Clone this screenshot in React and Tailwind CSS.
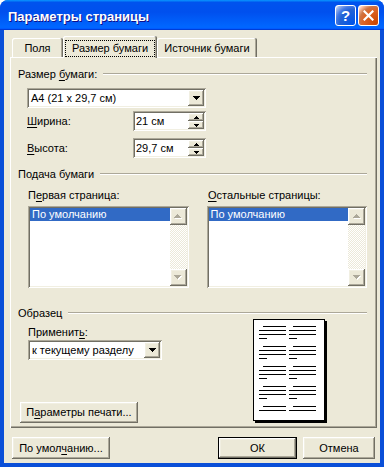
import React from "react";

// classic 3D edges (XP colours)
const raised =
  "shadow-[inset_-1px_-1px_#716f64,inset_1px_1px_#ffffff,inset_-2px_-2px_#aca899,inset_2px_2px_#f1efe2]";
const sunken =
  "shadow-[inset_1px_1px_#aca899,inset_-1px_-1px_#ffffff,inset_2px_2px_#716f64,inset_-2px_-2px_#f1efe2]";

const ArrowDown = ({ color = "#000" }) => (
  <svg width="7" height="4" viewBox="0 0 7 4" shapeRendering="crispEdges">
    <path d="M0 0h7v1H0zM1 1h5v1H1zM2 2h3v1H2zM3 3h1v1H3z" fill={color} />
  </svg>
);

const SmallUp = () => (
  <svg width="5" height="3" viewBox="0 0 5 3" shapeRendering="crispEdges">
    <path d="M2 0h1v1H2zM1 1h3v1H1zM0 2h5v1H0z" fill="#000" />
  </svg>
);

const SmallDown = () => (
  <svg width="5" height="3" viewBox="0 0 5 3" shapeRendering="crispEdges">
    <path d="M0 0h5v1H0zM1 1h3v1H1zM2 2h1v1H2z" fill="#000" />
  </svg>
);

const GrayArrow = ({ up }) => (
  <svg width="8" height="5" viewBox="0 0 8 5" shapeRendering="crispEdges">
    {up ? (
      <>
        <path d="M4 1h1v1H4zM3 2h3v1H3zM2 3h5v1H2zM1 4h7v1H1z" fill="#fff" />
        <path d="M3 0h1v1H3zM2 1h3v1H2zM1 2h5v1H1zM0 3h7v1H0z" fill="#aca899" />
      </>
    ) : (
      <>
        <path d="M1 1h7v1H1zM2 2h5v1H2zM3 3h3v1H3zM4 4h1v1H4z" fill="#fff" />
        <path d="M0 0h7v1H0zM1 1h5v1H1zM2 2h3v1H2zM3 3h1v1H3z" fill="#aca899" />
      </>
    )}
  </svg>
);

const U = ({ children }) => <span className="underline underline-offset-[2px]">{children}</span>;

function Header({ children, className = "" }) {
  return (
    <div className={`flex items-center h-[14px] ${className}`}>
      <span className="whitespace-nowrap">{children}</span>
      <div className="flex-1 ml-[6px] h-[2px] border-t border-[#aca899] border-b border-b-white" />
    </div>
  );
}

function Combo({ text, className = "" }) {
  return (
    <div className={`h-[20px] bg-white ${sunken} flex items-center pl-[4px] pr-[2px] ${className}`}>
      <span className="flex-1 whitespace-nowrap">{text}</span>
      <div className={`w-[16px] h-[16px] bg-[#ece9d8] ${raised} flex items-center justify-center`}>
        <ArrowDown />
      </div>
    </div>
  );
}

function Spin({ value }) {
  return (
    <div className={`w-[73px] h-[20px] bg-white ${sunken} flex items-center pl-[3px] pr-[2px]`}>
      <span className="flex-1">{value}</span>
      <div className="flex flex-col">
        <div className={`w-[16px] h-[8px] bg-[#ece9d8] ${raised} flex items-center justify-center`}>
          <SmallUp />
        </div>
        <div className={`w-[16px] h-[8px] bg-[#ece9d8] ${raised} flex items-center justify-center`}>
          <SmallDown />
        </div>
      </div>
    </div>
  );
}

function ListBox({ className = "" }) {
  return (
    <div className={`w-[162px] h-[82px] bg-white ${sunken} p-[2px] flex ${className}`}>
      <div className="flex-1">
        <div className="h-[13px] bg-[#316ac5] text-white pl-[2px] flex items-center">По умолчанию</div>
      </div>
      <div className="w-[17px] flex flex-col">
        <div className={`h-[17px] bg-[#ece9d8] ${raised} flex items-center justify-center`}>
          <GrayArrow up />
        </div>
        <div className="flex-1 bg-[repeating-conic-gradient(#ffffff_0%_25%,#ece9d8_0%_50%)] bg-[length:2px_2px]" />
        <div className={`h-[17px] bg-[#ece9d8] ${raised} flex items-center justify-center`}>
          <GrayArrow />
        </div>
      </div>
    </div>
  );
}

function Button({ children, className = "", isDefault }) {
  if (isDefault) {
    return (
      <div className={`border border-black ${className}`}>
        <div className={`h-full bg-[#ece9d8] ${raised} flex items-center justify-center`}>{children}</div>
      </div>
    );
  }
  return (
    <div className={`bg-[#ece9d8] ${raised} flex items-center justify-center whitespace-nowrap ${className}`}>
      {children}
    </div>
  );
}

function PreviewColumn() {
  const groups = [4, 4, 4, 4, 2];
  return (
    <div className="w-[27px] flex flex-col gap-[7px]">
      {groups.map((n, g) => (
        <div key={g} className="flex flex-col gap-[3px]">
          <div className="h-[1px] bg-black ml-[4px]" />
          {n > 1 && <div className="h-[1px] bg-black" />}
          {n > 2 && <div className="h-[1px] bg-black" />}
          {n > 3 && <div className="h-[1px] w-[8px] bg-black" />}
        </div>
      ))}
    </div>
  );
}

export default function App() {
  return (
    <div className="w-[384px] h-[470px] bg-white font-['Liberation_Sans',Arial,sans-serif] text-[11px] leading-[13px] text-black">
      <div className="w-[384px] h-[467px] flex flex-col rounded-t-[8px] overflow-hidden bg-[#0a4fd8]">
        {/* title bar */}
        <div className="h-[30px] flex items-center bg-[linear-gradient(180deg,#0997ff,#0053ee_8%,#0050ee_40%,#0066ff_88%,#0066ff_93%,#005bff_95%,#003dd7_96%,#003dd7)]">
          <span className="ml-[8px] pt-[2px] text-white font-bold text-[13px] [text-shadow:1px_1px_#0f1089]">
            Параметры страницы
          </span>
          <div className="ml-auto mr-[5px] flex gap-[2px]">
            <div className="w-[21px] h-[21px] rounded-[3px] border border-white bg-[radial-gradient(circle_at_90%_90%,#0054e9_0%,#2263d5_55%,#4479e4_70%,#a3bbec_90%,#ffffff_100%)] flex items-center justify-center text-white font-bold text-[15px] leading-none">
              ?
            </div>
            <div className="w-[21px] h-[21px] rounded-[3px] border border-white bg-[radial-gradient(circle_at_90%_90%,#cc4600_0%,#dc6527_55%,#cd7546_70%,#ffccb2_90%,#ffffff_100%)] flex items-center justify-center">
              <svg width="11" height="11" viewBox="0 0 11 11">
                <path d="M1.5 1.5l8 8M9.5 1.5l-8 8" stroke="#fff" strokeWidth="2.2" strokeLinecap="square" />
              </svg>
            </div>
          </div>
        </div>

        {/* body */}
        <div className="flex-1 mx-[4px] mb-[4px] bg-[#ece9d8] flex flex-col pt-[6px]">
          {/* tabs */}
          <div className="flex items-end h-[21px] ml-[8px]">
            <div className="w-[51px] h-[19px] rounded-t-[2px] shadow-[inset_-1px_0_#716f64,inset_1px_1px_#ffffff,inset_-2px_0_#aca899] flex items-center justify-center pt-[1px]">
              Поля
            </div>
            <div className="relative z-10 w-[94px] h-[22px] -mb-[1px] rounded-t-[2px] bg-[#ece9d8] shadow-[inset_-1px_0_#716f64,inset_1px_1px_#ffffff,inset_-2px_0_#aca899] flex items-start justify-center pt-[4px]">
              <span className="h-[17px] border border-dotted border-black px-[6px] flex items-center">Размер бумаги</span>
            </div>
            <div className="w-[100px] h-[19px] rounded-t-[2px] shadow-[inset_-1px_0_#716f64,inset_1px_1px_#ffffff,inset_-2px_0_#aca899] flex items-center justify-center pt-[1px]">
              Источник бумаги
            </div>
          </div>

          {/* tab panel */}
          <div className="ml-[6px] w-[367px] h-[371px] shadow-[inset_1px_1px_#ffffff,inset_-1px_-1px_#716f64,inset_-2px_-2px_#aca899] pt-[10px] pl-[8px] pr-[10px] flex flex-col">
            <Header>
              Размер <U>б</U>умаги:
            </Header>
            <Combo text="A4 (21 x 29,7 см)" className="mt-[7px] ml-[9px] w-[179px]" />
            <div className="mt-[3px] ml-[9px] h-[20px] flex items-center">
              <span className="w-[106px]">
                <U>Ш</U>ирина:
              </span>
              <Spin value="21 см" />
            </div>
            <div className="mt-[7px] ml-[9px] h-[20px] flex items-center">
              <span className="w-[106px]">
                <U>В</U>ысота:
              </span>
              <Spin value="29,7 см" />
            </div>

            <Header className="mt-[9px]">Подача бумаги</Header>
            <div className="mt-[7px] h-[14px] flex items-center">
              <span className="ml-[10px] w-[180px]">
                П<U>е</U>рвая страница:
              </span>
              <span>
                <U>О</U>стальные страницы:
              </span>
            </div>
            <div className="mt-[4px] flex">
              <ListBox className="ml-[10px]" />
              <ListBox className="ml-[18px]" />
            </div>

            <Header className="mt-[18px]">Образец</Header>
            <div className="flex">
              <div className="w-[235px] flex flex-col">
                <div className="mt-[5px] ml-[10px] h-[14px] flex items-center">
                  <span>
                    Применит<U>ь</U>:
                  </span>
                </div>
                <Combo text="к текущему разделу" className="mt-[1px] ml-[10px] w-[134px]" />
                <Button className="mt-[42px] ml-[2px] w-[118px] h-[21px]">
                  <span>
                    П<U>а</U>раметры печати...
                  </span>
                </Button>
              </div>
              <div className="-mt-[1px] w-[72px] h-[102px] bg-white border border-black shadow-[2px_2px_0_#000] flex gap-[3px] pt-[6px] pl-[5px]">
                <PreviewColumn />
                <PreviewColumn />
              </div>
            </div>
          </div>

          {/* bottom buttons */}
          <div className="mt-[9px] flex">
            <Button className="ml-[8px] w-[98px] h-[22px]">
              <span>
                По умол<U>ч</U>анию...
              </span>
            </Button>
            <Button isDefault className="ml-auto w-[79px] h-[22px]">
              ОК
            </Button>
            <Button className="ml-[6px] mr-[5px] w-[72px] h-[22px]">Отмена</Button>
          </div>
        </div>
      </div>
    </div>
  );
}
